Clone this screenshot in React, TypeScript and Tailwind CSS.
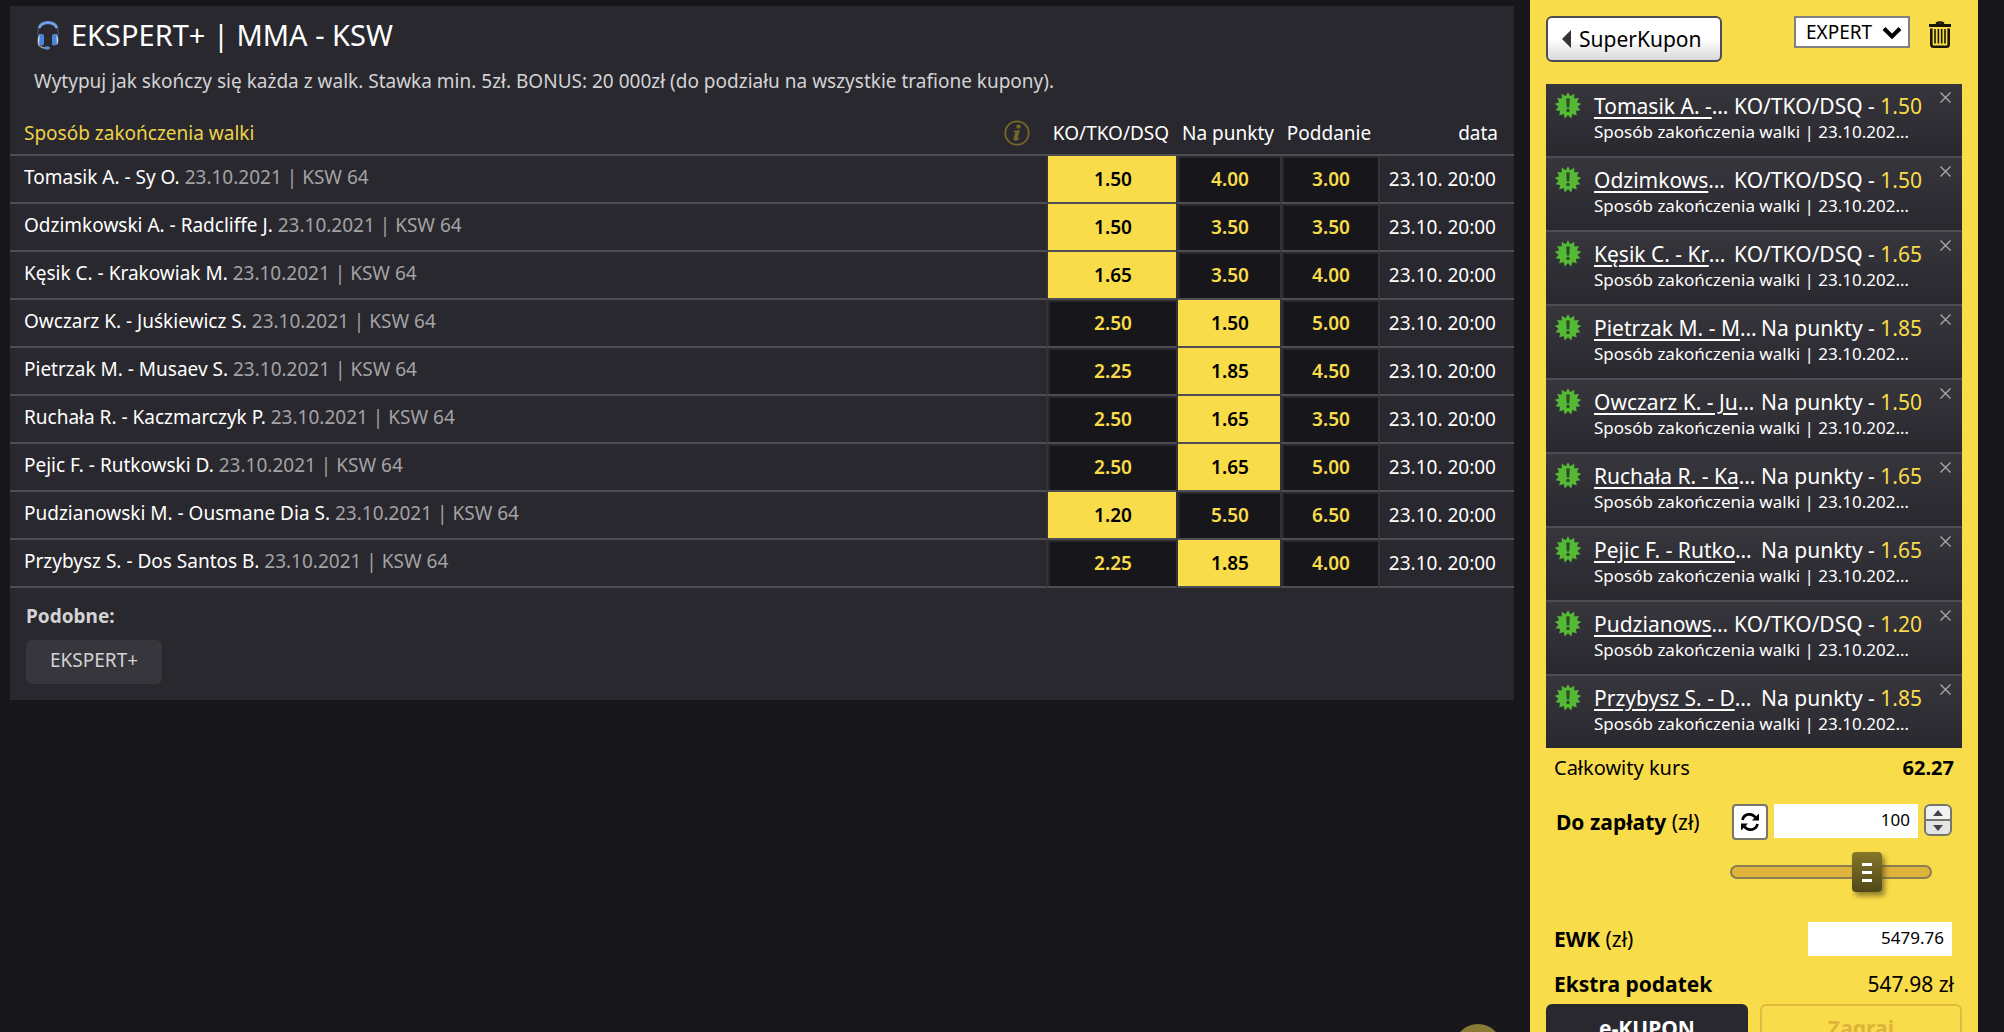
import React from 'react';

const HEADERS = ['KO/TKO/DSQ', 'Na punkty', 'Poddanie'];

const FIGHTS = [
  { name: 'Tomasik A. - Sy O.', odds: ['1.50', '4.00', '3.00'], pick: 0 },
  { name: 'Odzimkowski A. - Radcliffe J.', odds: ['1.50', '3.50', '3.50'], pick: 0 },
  { name: 'Kęsik C. - Krakowiak M.', odds: ['1.65', '3.50', '4.00'], pick: 0 },
  { name: 'Owczarz K. - Juśkiewicz S.', odds: ['2.50', '1.50', '5.00'], pick: 1 },
  { name: 'Pietrzak M. - Musaev S.', odds: ['2.25', '1.85', '4.50'], pick: 1 },
  { name: 'Ruchała R. - Kaczmarczyk P.', odds: ['2.50', '1.65', '3.50'], pick: 1 },
  { name: 'Pejic F. - Rutkowski D.', odds: ['2.50', '1.65', '5.00'], pick: 1 },
  { name: 'Pudzianowski M. - Ousmane Dia S.', odds: ['1.20', '5.50', '6.50'], pick: 0 },
  { name: 'Przybysz S. - Dos Santos B.', odds: ['2.25', '1.85', '4.00'], pick: 1 },
];

const COUPON = [0, 1, 2, 4, 3, 5, 6, 7, 8].map((i) => FIGHTS[i]);

function Headset() {
  return (
    <svg viewBox="0 0 24 30" className="h-[30px] w-6 shrink-0" aria-hidden="true">
      <path d="M2 15C1 7 6 3.500 12 3.500S23 7 22 15" fill="none" stroke="#4a5365" strokeWidth="1.300" />
      <path d="M3 8C5 3.500 8.500 2.500 12 2.500S19 3.500 21 8" fill="none" stroke="#6f9fe2" strokeWidth="3" />
      <path d="M2 23C3 26.500 6 28 10 28" fill="none" stroke="#9b9fa8" strokeWidth="1.300" />
      <path d="M4.500 14C1 14.500 .8 24 3.500 25z" fill="#c3cddd" />
      <path d="M19.500 14C23 14.500 23.200 24 20.500 25z" fill="#c3cddd" />
      <rect x="3.500" y="14" width="4.500" height="11.500" rx="1.800" fill="#4a84dc" />
      <rect x="16" y="14" width="4.500" height="11.500" rx="1.800" fill="#4a84dc" />
      <ellipse cx="11" cy="28" rx="3" ry="1.700" fill="#5b8bd0" />
    </svg>
  );
}

function InfoIcon() {
  return (
    <svg viewBox="0 0 26 26" className="size-[26px]" aria-hidden="true">
      <circle cx="13" cy="13" r="11.700" fill="none" stroke="#75672b" strokeWidth="1.800" />
      <circle cx="14.500" cy="6.600" r="2.200" fill="#75672b" />
      <path d="M9.500 10.700L16 10L13.700 18.200Q13.500 19.500 15.800 17.400L16.300 18.100Q12.800 21.700 10.400 20.500Q9.200 19.700 9.800 17.800L11.200 12.700Q11.400 11.700 9.500 11.700Z" fill="#75672b" />
    </svg>
  );
}

function Burst() {
  const points = Array.from({ length: 26 }, (_, i) => {
    const r = i % 2 ? 9.5 : 13.3;
    const a = (i * Math.PI) / 13;
    return `${(13 + r * Math.sin(a)).toFixed(2)},${(13.5 - r * Math.cos(a)).toFixed(2)}`;
  }).join(' ');
  return (
    <svg viewBox="0 0 26 27" className="h-[27px] w-[26px] shrink-0" aria-hidden="true">
      <polygon points={points} fill="#55b936" />
      <path d="M11.200 6.500h3.600l-.6 9h-2.400z" fill="#2b4a26" />
      <circle cx="13" cy="18.500" r="1.800" fill="#2b4a26" />
    </svg>
  );
}

function Trash() {
  return (
    <svg viewBox="0 0 24 28" className="h-7 w-6" aria-hidden="true" fill="none" stroke="#1b1706">
      <path d="M1 4.500H23" strokeWidth="3" />
      <path d="M8 2.500Q12 .5 16 2.500" strokeWidth="2.500" />
      <path d="M3.300 7.500V23.500Q3.300 25.800 5.500 25.800H18.500Q20.700 25.800 20.700 23.500V7.500" strokeWidth="2.600" />
      <path d="M7 8V22.500M10.400 8V22.500M13.700 8V22.500M17 8V22.500" strokeWidth="1.600" />
    </svg>
  );
}

function Refresh() {
  return (
    <svg viewBox="0 0 20 20" className="size-5" aria-hidden="true" fill="none" stroke="#000" strokeWidth="2.800">
      <path d="M2.500 8C4 1.500 12 .5 15.500 5.500" />
      <path d="M17.500 12C16 18.500 8 19.500 4.500 14.500" />
      <path d="M19 1.500V8.500H12z" fill="#000" stroke="none" />
      <path d="M1 18.500V11.500H8z" fill="#000" stroke="none" />
    </svg>
  );
}

function OddsTable() {
  return (
    <table className="mt-[15px] w-full table-fixed border-separate border-spacing-0 text-[19px] leading-6 text-white">
      <colgroup>
        <col />
        <col className="w-[130px]" />
        <col className="w-[104px]" />
        <col className="w-[98px]" />
        <col className="w-[136px]" />
      </colgroup>
      <thead>
        <tr className="h-[46px]">
          <th scope="col" className="border-b-2 border-[#4e4d53] pb-0 pl-3.5 pr-4 pt-0.5 text-left font-normal text-[#eed34a]">
            <div className="flex items-center justify-between">
              Sposób zakończenia walki
              <button aria-label="Informacje"><InfoIcon /></button>
            </div>
          </th>
          {HEADERS.map((h) => (
            <th key={h} scope="col" className="whitespace-nowrap border-b-2 border-[#4e4d53] px-0 pb-0 pt-0.5 text-center font-normal">{h}</th>
          ))}
          <th scope="col" className="border-b-2 border-[#4e4d53] pb-0 pl-0 pr-4 pt-0.5 text-right font-normal">data</th>
        </tr>
      </thead>
      <tbody>
        {FIGHTS.map((f) => (
          <tr key={f.name} className="h-12">
            <td className="truncate border-b-2 border-[#4e4d53] pb-1 pl-3.5 pr-0 pt-0">
              {f.name} <span className="text-[#a3a3a6]">23.10.2021 | KSW 64</span>
            </td>
            {f.odds.map((odd, i) => (
              <td key={HEADERS[i]} className="border-b-2 border-l-2 border-b-[#4e4d53] border-l-[#333238] p-0">
                <button
                  aria-label={`${f.name}, ${HEADERS[i]}, ${odd}`}
                  className={`block h-[46px] w-full border-l-2 border-t-2 pb-0.5 text-center font-semibold ${
                    i === f.pick
                      ? 'border-[#f9dc4a] bg-[#f9dc4a] text-black'
                      : 'border-[#29282e] bg-[#17161b] text-[#f9dc4a]'
                  }`}
                >
                  {odd}
                </button>
              </td>
            ))}
            <td className="whitespace-nowrap border-b-2 border-l-2 border-b-[#4e4d53] border-l-[#333238] py-0 pl-0 pr-[18px] text-right">23.10. 20:00</td>
          </tr>
        ))}
      </tbody>
    </table>
  );
}

function Coupon() {
  return (
    <aside className="w-[448px] bg-[#f9dc4a] px-4 pt-4 text-[21px] leading-6 text-black">
      <div className="flex h-[68px] items-start">
        <button className="flex h-[46px] items-center gap-2 rounded-md border-2 border-[#4e4d53] bg-linear-to-b from-white from-50% to-[#d9d9d9] pl-3.5 pr-[18px]">
          <svg viewBox="0 0 9 18" className="h-[18px] w-[9px]" aria-hidden="true"><path d="M9 0V18L0 9z" fill="#333" /></svg>
          SuperKupon
        </button>
        <div className="relative ml-auto h-8 w-29">
          <select aria-label="Tryb kuponu" className="h-full w-full appearance-none border-2 border-[#808080] bg-white pl-2.5 text-[19px] leading-6">
            <option>EXPERT</option>
          </select>
          <svg viewBox="0 0 20 14" className="pointer-events-none absolute right-2 top-2.5 h-3.5 w-5" aria-hidden="true">
            <path d="M2 2.500L10 10.500L18 2.500" fill="none" stroke="#000" strokeWidth="4" />
          </svg>
        </div>
        <button aria-label="Wyczyść kupon" className="ml-[18px] mr-2.5 mt-[5px]"><Trash /></button>
      </div>

      <ul className="divide-y-2 divide-[#4e4d53] bg-[#29282e] text-white">
        {COUPON.map((f) => (
          <li key={f.name} className="flex h-[74px] items-start bg-linear-to-b from-[#37363c] to-[#29282e] pl-[9px] pt-2 last:h-[72px]">
            <Burst />
            <div className="ml-[13px] min-w-0 flex-1">
              <div className="flex gap-0.5 leading-7">
                <div className="min-w-0 flex-1 truncate"><a href="#walka" className="underline decoration-2 underline-offset-3">{f.name}</a></div>
                <div className="shrink-0">{HEADERS[f.pick]} - <span className="text-[#f9dc4a]">{f.odds[f.pick]}</span></div>
              </div>
              <div className="truncate pr-2 text-[17px] leading-6">Sposób zakończenia walki | 23.10.2021 | KSW 64</div>
            </div>
            <button aria-label={`Usuń ${f.name}`} className="ml-[18px] mr-[11px] flex">
              <svg viewBox="0 0 11 11" className="size-[11px]" aria-hidden="true"><path d="M.5 .5L10.500 10.500M10.500 .5L.5 10.500" stroke="#a7a7aa" strokeWidth="1.400" /></svg>
            </button>
          </li>
        ))}
      </ul>

      <div className="flex justify-between px-2 pt-2 text-[20px]"><span>Całkowity kurs</span><strong>62.27</strong></div>

      <div className="flex items-start px-2.5 pt-6">
        <label htmlFor="stake" className="mt-1.5"><b>Do zapłaty</b> (zł)</label>
        <button aria-label="Odśwież" className="ml-auto flex size-9 items-center justify-center rounded-sm border-2 border-[#77766c] bg-white"><Refresh /></button>
        <input id="stake" defaultValue="100" className="ml-1.5 h-[34px] w-36 bg-white px-2 pb-1 text-right text-[17px]" />
        <div className="ml-1.5 grid w-7 gap-0.5 overflow-hidden rounded-md border-2 border-[#77766c] bg-[#77766c]">
          <button aria-label="Zwiększ" className="flex h-[13px] items-center justify-center bg-[#f2f2f2]">
            <svg viewBox="0 0 10 6" className="h-1.5 w-2.5" aria-hidden="true"><path d="M0 6L5 0L10 6z" fill="#444" /></svg>
          </button>
          <button aria-label="Zmniejsz" className="flex h-[13px] items-center justify-center bg-[#e4e4e4]">
            <svg viewBox="0 0 10 6" className="h-1.5 w-2.5" aria-hidden="true"><path d="M0 0L5 6L10 0z" fill="#444" /></svg>
          </button>
        </div>
      </div>

      <div className="relative ml-auto mr-[30px] mt-3 flex h-10 w-[202px] items-center">
        <div className="h-3.5 w-full rounded-full border-2 border-[#8a7d55] bg-[#e0b33c]" />
        <input type="range" aria-label="Stawka" defaultValue="72" className="absolute inset-0 opacity-0" />
        <div className="pointer-events-none absolute left-[122px] top-0 flex h-10 w-[30px] flex-col items-center justify-center gap-[5px] rounded-sm bg-linear-to-b from-[#867728] to-[#51481a] shadow-[3px_4px_5px_rgba(80,70,20,0.6)]">
          <span className="h-[3px] w-2.5 bg-white" />
          <span className="h-[3px] w-2.5 bg-white" />
          <span className="h-[3px] w-2.5 bg-white" />
        </div>
      </div>

      <div className="mt-[30px] flex items-center justify-between pl-2 pr-2.5">
        <label htmlFor="ewk"><b>EWK</b> (zł)</label>
        <input id="ewk" defaultValue="5479.76" className="h-[34px] w-36 bg-white px-2 pb-1 text-right text-[17px]" />
      </div>

      <div className="mt-4 flex justify-between px-2"><strong>Ekstra podatek</strong><span>547.98 zł</span></div>

      <div className="mt-2 grid grid-cols-2 gap-3 font-bold">
        <button className="h-12 rounded-md bg-[#29282e] text-white">e-KUPON</button>
        <button disabled className="h-12 rounded-md border-2 border-[#e3ba3e] text-[#dfb43b]">Zagraj</button>
      </div>
    </aside>
  );
}

export default function App() {
  return (
    <div className="relative flex h-screen items-start overflow-hidden bg-[#17161b] font-['Noto_Sans',sans-serif]">
      <main className="ml-2.5 mr-4 mt-1.5 min-w-0 flex-1 bg-[#29282e] pb-4 pt-[11px]">
        <h1 className="flex items-center gap-[11px] pl-[26px] text-[29px] leading-9 text-white"><Headset />EKSPERT+ | MMA - KSW</h1>
        <p className="mt-3.5 pl-6 text-[19px] leading-7 text-[#d3d3d5]">
          Wytypuj jak skończy się każda z walk. Stawka min. 5zł. BONUS: 20 000zł (do podziału na wszystkie trafione kupony).
        </p>
        <OddsTable />
        <section className="px-4 pt-4 text-[19px] leading-6 text-[#d3d3d5]">
          <h2 className="font-bold">Podobne:</h2>
          <a href="#ekspert" className="mt-3 flex h-11 w-fit items-center rounded-md bg-[#37363c] px-6 pb-1">EKSPERT+</a>
        </section>
      </main>
      <div className="mr-[26px] shrink-0 self-stretch bg-[#f9dc4a]"><Coupon /></div>
      <div className="absolute left-[1454px] top-[1024px] size-12 rounded-full bg-[#887a32]" />
    </div>
  );
}
